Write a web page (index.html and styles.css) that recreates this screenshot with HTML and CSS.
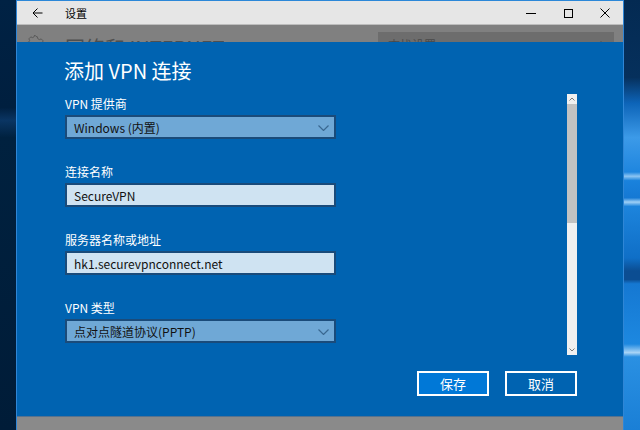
FILE: index.html
```html
<!DOCTYPE html>
<html lang="zh-CN">
<head>
<meta charset="utf-8">
<title>设置</title>
<link rel="stylesheet" href="styles.css">
</head>
<body>
<div class="screen">
  <div class="desk desk-left"></div>
  <div class="window">
    <div class="titlebar">
      <div class="tb-back">
        <svg width="11" height="10" viewBox="0 0 11 10"><path d="M1 5H10.5M5.5 0.5L1 5L5.5 9.5" fill="none" stroke="#000" stroke-width="1"/></svg>
      </div>
      <div class="tb-title">设置</div>
      <div class="tb-spacer"></div>
      <div class="tb-btn">
        <svg width="10" height="10" viewBox="0 0 10 10"><path d="M0 5.5H10" stroke="#000" stroke-width="1"/></svg>
      </div>
      <div class="tb-btn">
        <svg width="10" height="10" viewBox="0 0 10 10"><rect x="1.5" y="1.5" width="8" height="8" fill="none" stroke="#000" stroke-width="1"/></svg>
      </div>
      <div class="tb-btn">
        <svg width="10" height="10" viewBox="0 0 10 10"><path d="M0.5 0.5L9.5 9.5M9.5 0.5L0.5 9.5" stroke="#000" stroke-width="1"/></svg>
      </div>
    </div>
    <div class="overlay">
      <div class="behind">
        <svg class="behind-gear" width="18" height="18" viewBox="0 0 18 18"><path d="M9 1.5l1.4 0.3 0.4 1.9 1.6 0.9 1.8-0.7 1.9 1.9-0.7 1.8 0.9 1.6 1.9 0.4v2.8l-1.9 0.4-0.9 1.6 0.7 1.8-1.9 1.9-1.8-0.7-1.6 0.9-0.4 1.9H7.6l-0.4-1.9-1.6-0.9-1.8 0.7-1.9-1.9 0.7-1.8-0.9-1.6-1.9-0.4V7.6l1.9-0.4 0.9-1.6-0.7-1.8 1.9-1.9 1.8 0.7 1.6-0.9 0.4-1.9z" fill="none" stroke="#5a5a5a" stroke-width="1"/></svg>
        <div class="behind-title">网络和 INTERNET</div>
        <div class="behind-spacer"></div>
        <div class="behind-search">
          <span>查找设置</span>
          <svg width="12" height="12" viewBox="0 0 12 12"><circle cx="7" cy="5" r="4" fill="none" stroke="#4a4a4a" stroke-width="1"/></svg>
        </div>
      </div>
      <div class="dialog">
        <h1 class="dlg-title">添加 VPN 连接</h1>
        <div class="dlg-body">
          <div class="fields">
            <div class="field">
              <div class="label">VPN 提供商</div>
              <div class="box select">
                <span>Windows (内置)</span>
                <svg width="11" height="6" viewBox="0 0 11 6"><path d="M0.5 0.5L5.5 5.5L10.5 0.5" fill="none" stroke="#3a6891" stroke-width="1.2"/></svg>
              </div>
            </div>
            <div class="field">
              <div class="label">连接名称</div>
              <div class="box input"><span>SecureVPN</span></div>
            </div>
            <div class="field">
              <div class="label">服务器名称或地址</div>
              <div class="box input"><span>hk1.securevpnconnect.net</span></div>
            </div>
            <div class="field">
              <div class="label">VPN 类型</div>
              <div class="box select">
                <span>点对点隧道协议(PPTP)</span>
                <svg width="11" height="6" viewBox="0 0 11 6"><path d="M0.5 0.5L5.5 5.5L10.5 0.5" fill="none" stroke="#3a6891" stroke-width="1.2"/></svg>
              </div>
            </div>
          </div>
          <div class="scrollbar">
            <div class="sb-arrow">
              <svg width="6" height="4" viewBox="0 0 6 4"><path d="M0.5 3.5L3 1L5.5 3.5" fill="none" stroke="#7a7a7a" stroke-width="1"/></svg>
            </div>
            <div class="sb-thumb"></div>
            <div class="sb-track"></div>
            <div class="sb-arrow">
              <svg width="6" height="4" viewBox="0 0 6 4"><path d="M0.5 0.5L3 3L5.5 0.5" fill="none" stroke="#7a7a7a" stroke-width="1"/></svg>
            </div>
          </div>
        </div>
        <div class="dlg-buttons">
          <button class="btn btn-primary">保存</button>
          <button class="btn">取消</button>
        </div>
      </div>
      <div class="behind-bottom"></div>
    </div>
  </div>
  <div class="desk desk-right"></div>
</div>
</body>
</html>
```

FILE: styles.css
```css
* { box-sizing: border-box; }
html, body { margin: 0; padding: 0; }
body {
  width: 640px;
  height: 430px;
  overflow: hidden;
  font-family: "Noto Sans CJK SC", "Noto Sans", sans-serif;
}
.screen {
  display: flex;
  width: 640px;
  height: 430px;
}
.desk { width: 16px; flex: none; }
.desk-left {
  background: linear-gradient(180deg, #002244 0%, #001f3f 25%, #0a3563 28%, #00213f 32%, #001c38 100%);
}
.desk-right {
  background: linear-gradient(180deg,
    #042a52 0%, #06305c 18%, #0d64b8 24%, #3c9ae8 32%, #1f86df 40%,
    #8cc4f2 41%, #1a82dc 42%, #1579d4 46%, #9fd0f6 47%, #1d84dc 48%,
    #0f6fc7 60%, #0b4d92 63%, #0b4d92 65%, #1578d2 66%, #1d88e0 80%,
    #a8d4f6 82%, #2a90e2 83%, #1a7fd6 100%);
}
.window {
  width: 608px;
  flex: none;
  display: flex;
  flex-direction: column;
  border-left: 1px solid #2f86d6;
  border-right: 1px solid #2f86d6;
}
.titlebar {
  height: 25px;
  flex: none;
  display: flex;
  align-items: center;
  background: #e6e6e6;
  border-top: 1px solid #2b87d8;
  border-bottom: 1px solid #bdbdbd;
}
.tb-back {
  width: 37px;
  height: 100%;
  display: flex;
  align-items: center;
  justify-content: center;
  padding-left: 3px;
}
.tb-back svg { display: block; }
.tb-title {
  margin-left: 11px;
  font-size: 11px;
  color: #000;
  line-height: 14px;
}
.tb-spacer { flex: 1; }
.tb-btn {
  width: 37px;
  height: 100%;
  display: flex;
  align-items: center;
  justify-content: center;
}
.tb-btn svg { display: block; }
.overlay {
  flex: 1;
  display: flex;
  flex-direction: column;
  background: #808080;
}
.behind {
  height: 17px;
  flex: none;
  overflow: hidden;
  display: flex;
  align-items: flex-start;
  padding-left: 10px;
}
.behind-gear { margin-top: 10px; flex: none; }
.behind-title {
  margin-left: 20px;
  margin-top: 10px;
  font-size: 20px;
  line-height: 26px;
  height: 7px;
  overflow: hidden;
  color: #4f4f4f;
  white-space: nowrap;
}
.behind-spacer { flex: 1; }
.behind-search {
  width: 236px;
  height: 10px;
  margin-top: 7px;
  margin-right: 9px;
  background: #6d6d6d;
  display: flex;
  align-items: flex-start;
  justify-content: space-between;
  padding: 5px 8px 0 10px;
  font-size: 12px;
  color: #4a4a4a;
  line-height: 16px;
  overflow: hidden;
}
.behind-search span { height: 5px; overflow: hidden; display: block; }
.behind-search svg { margin-top: 4px; }
.dialog {
  height: 374px;
  flex: none;
  background: #0063b1;
  display: flex;
  flex-direction: column;
  padding: 16px 46px 20px 47px;
  color: #fff;
}
.dlg-title {
  margin: 0 0 10px 0;
  font-size: 20px;
  line-height: 26px;
  font-weight: normal;
  height: 26px;
}
.dlg-body {
  height: 261px;
  display: flex;
  justify-content: space-between;
}
.fields {
  width: 272px;
  padding-left: 1px;
  padding-top: 1px;
  display: flex;
  flex-direction: column;
  gap: 24px;
}
.label {
  font-size: 12px;
  line-height: 18px;
  height: 18px;
  margin-bottom: 2px;
  white-space: nowrap;
}
.box {
  width: 271px;
  height: 24px;
  border: 2px solid #1a4b7a;
  display: flex;
  align-items: center;
  justify-content: space-between;
  padding: 0 5px 0 7px;
  font-size: 12px;
  color: #111;
  white-space: nowrap;
}
.select { background: #6fa8d6; }
.input { background: #cfe3f2; }
.box svg { display: block; margin-top: 1px; }
.scrollbar {
  width: 10px;
  display: flex;
  flex-direction: column;
  background: #f0f0f0;
}
.sb-arrow {
  height: 10px;
  flex: none;
  display: flex;
  align-items: center;
  justify-content: center;
  background: #f0f0f0;
}
.sb-thumb {
  height: 119px;
  flex: none;
  background: #c2c2c2;
}
.sb-track { flex: 1; }
.dlg-buttons {
  margin-top: 16px;
  display: flex;
  justify-content: flex-end;
  gap: 16px;
}
.btn {
  width: 72px;
  height: 25px;
  border: 2px solid #fff;
  background: transparent;
  color: #fff;
  font-family: "Noto Sans CJK SC", sans-serif;
  font-size: 13px;
  line-height: 19px;
  padding: 0;
}
.btn-primary { background: #0078d7; }
.behind-bottom {
  flex: 1;
  background: #8a8a8a;
  border-top: 1px solid #56728f;
}
```
